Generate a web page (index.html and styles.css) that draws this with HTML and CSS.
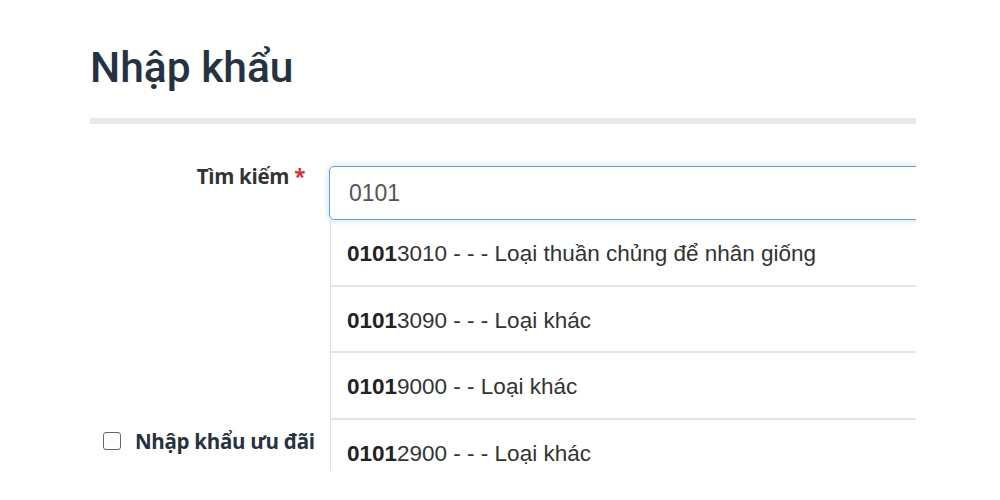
FILE: index.html
```html
<!DOCTYPE html>
<html lang="vi">
<head>
<meta charset="utf-8">
<title>Nhập khẩu</title>
<link rel="stylesheet" href="styles.css">
</head>
<body>
<div class="page">
  <h1 class="title">Nhập khẩu</h1>
  <div class="divider"></div>
  <div class="form">
    <div class="row">
      <label class="label">Tìm kiếm <span class="req">*</span></label>
      <div class="field">
        <div class="input">0101</div>
        <ul class="dropdown">
          <li class="item"><b>0101</b>3010 - - - Loại thuần chủng để nhân giống</li>
          <li class="item"><b>0101</b>3090 - - - Loại khác</li>
          <li class="item"><b>0101</b>9000 - - Loại khác</li>
          <li class="item"><b>0101</b>2900 - - - Loại khác</li>
        </ul>
      </div>
    </div>
    <div class="check">
      <span class="box"></span>
      <span class="check-label">Nhập khẩu ưu đãi</span>
    </div>
  </div>
</div>
</body>
</html>
```

FILE: styles.css
```css
html, body {
  margin: 0;
  padding: 0;
  background: #fff;
  height: 500px;
  overflow: hidden;
}
.page {
  margin-left: 90px;
  width: 826px;
  height: 470px;
  overflow: hidden;
  position: relative;
}
.title {
  margin: 0;
  padding-top: 42px;
  font-family: Roboto, "Liberation Sans", sans-serif;
  font-weight: 500;
  font-size: 42.5px;
  line-height: 52px;
  color: #253242;
}
.divider {
  margin-top: 24px;
  height: 6px;
  background: #e8e9ed;
}
.form {
  position: relative;
  margin-top: 42px;
}
.row {
  display: flex;
}
.label {
  flex: none;
  width: 215px;
  text-align: right;
  margin-top: -3px;
  font-family: "Open Sans", "Noto Sans", sans-serif;
  font-weight: 700;
  font-size: 20.5px;
  line-height: 26px;
  color: #333;
  letter-spacing: -0.3px;
}
.req {
  color: #d9302c;
}
.field {
  flex: none;
  margin-left: 24px;
  width: 640px;
}
.input {
  box-sizing: border-box;
  height: 54px;
  width: 640px;
  border: 1px solid #66a2d8;
  border-radius: 5px;
  box-shadow: 0 0 6px rgba(102, 175, 233, 0.45);
  padding: 12px 19px;
  font-family: "Liberation Sans", Arial, sans-serif;
  font-size: 23px;
  line-height: 28px;
  color: #555;
}
.dropdown {
  list-style: none;
  margin: 0 0 0 1px;
  padding: 0;
  border-left: 1px solid #ddd;
  width: 640px;
}
.item {
  height: 64.5px;
  line-height: 68px;
  padding-left: 16px;
  border-bottom: 2px solid #e4e4e4;
  font-family: "Liberation Sans", Arial, sans-serif;
  font-size: 22.5px;
  color: #333;
}
.item b {
  color: #222;
}
.check {
  position: absolute;
  left: 13px;
  top: 261px;
  display: flex;
  align-items: center;
  gap: 14px;
}
.box {
  width: 16px;
  height: 16px;
  border: 1px solid #666;
  border-radius: 3px;
}
.check-label {
  font-family: "Open Sans", "Noto Sans", sans-serif;
  font-weight: 700;
  font-size: 20.5px;
  color: #253242;
  letter-spacing: -0.3px;
}
```
